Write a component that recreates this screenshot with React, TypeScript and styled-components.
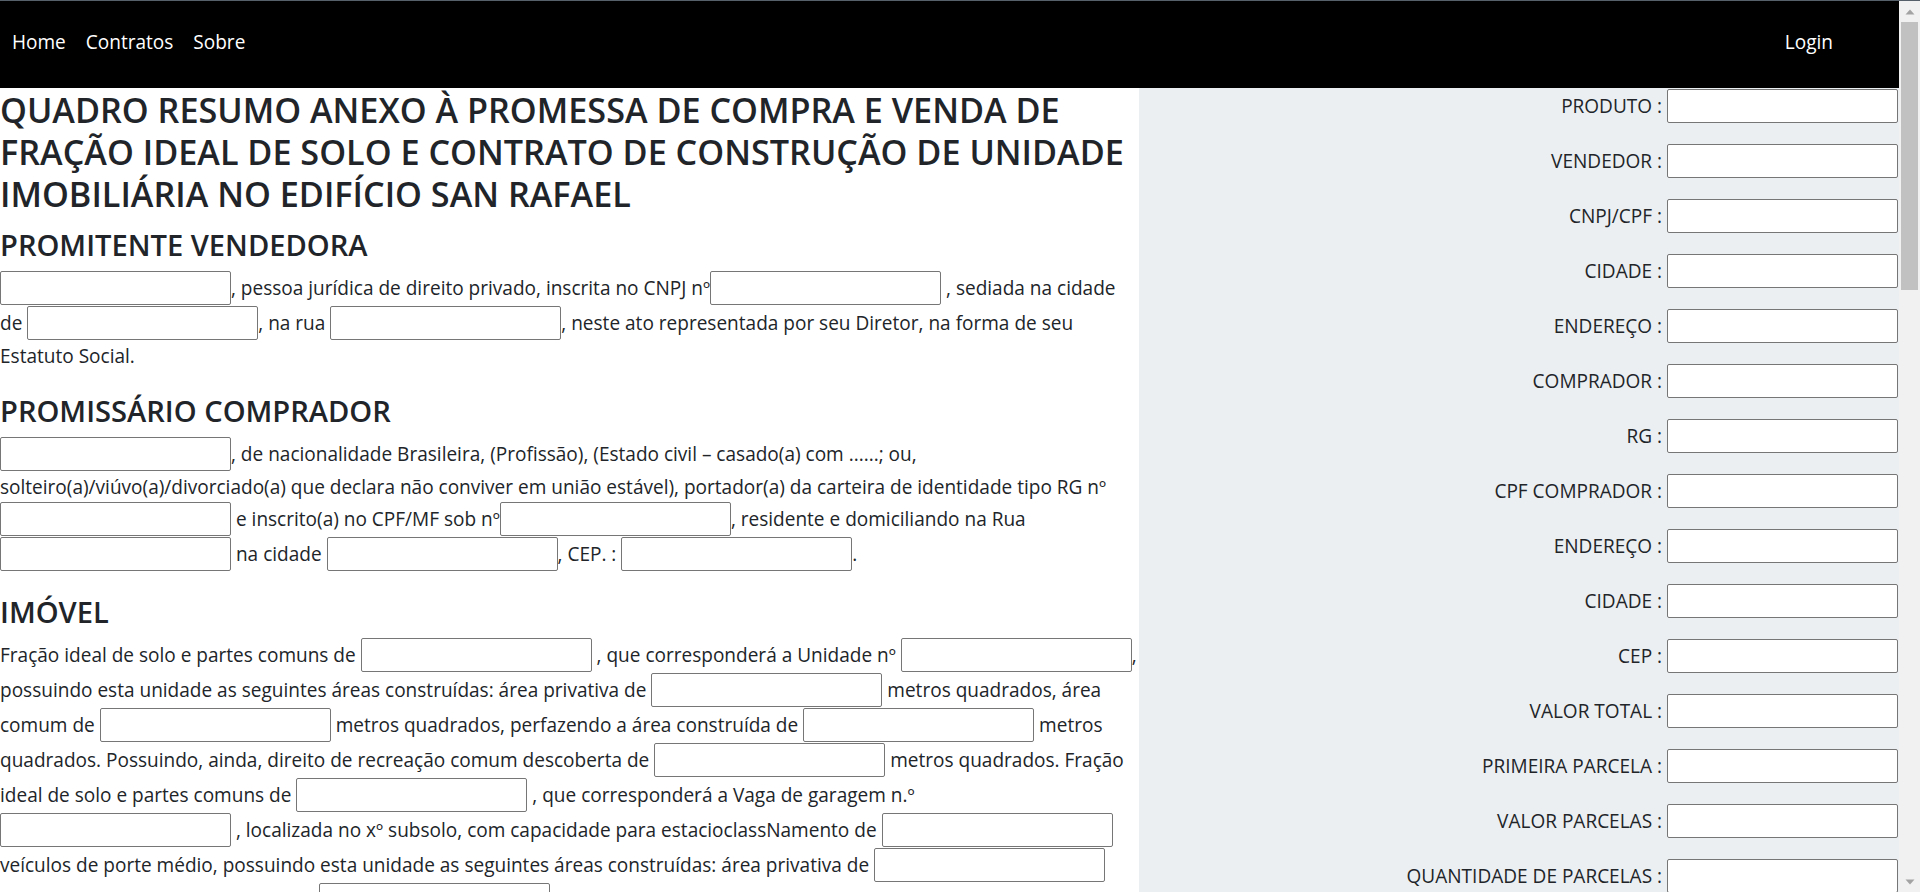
import React from "react";
import styled, { createGlobalStyle } from "styled-components";

const GlobalStyle = createGlobalStyle`
  *, *::before, *::after { box-sizing: border-box; }
  html, body { margin: 0; padding: 0; height: 100%; }
  body {
    font-family: "Open Sans", "Noto Sans", sans-serif;
    font-size: 19.05px;
    line-height: 30px;
    color: #212529;
    background: #ffffff;
    overflow: hidden;
  }
`;

const Window = styled.div`
  display: flex;
  height: 100vh;
  border-top: 1px solid #56606b;
  overflow: hidden;
`;

const Viewport = styled.div`
  flex: 1;
  min-width: 0;
  overflow-y: auto;
  scrollbar-width: none;
  &::-webkit-scrollbar { display: none; }
`;

const ScrollRail = styled.div`
  flex: 0 0 21px;
  display: flex;
  flex-direction: column;
  background: #f1f1f1;
`;

const ScrollButton = styled.div`
  flex: 0 0 21px;
  display: flex;
  align-items: center;
  justify-content: center;
  color: #a3a3a3;
`;

const ScrollTrack = styled.div`
  flex: 1;
  padding: 0 2px;
`;

const ScrollThumb = styled.div`
  height: 268px;
  background: #c1c1c1;
`;

const Navbar = styled.nav`
  display: flex;
  align-items: center;
  height: 87px;
  padding: 0 66px 6px 12px;
  background: #000000;
`;

const NavLink = styled.a<{ $push?: boolean }>`
  color: #ffffff;
  text-decoration: none;
  line-height: 30px;
  margin-right: 20px;
  margin-left: ${(p) => (p.$push ? "auto" : "0")};
  &:last-child { margin-right: 0; }
`;

const Page = styled.main`
  display: grid;
  grid-template-columns: 60% 40%;
`;

const Contract = styled.section`
  padding: 1px 0 0;
`;

const Title = styled.h3`
  margin: 0 0 10px;
  font-size: 34.2px;
  line-height: 42px;
  font-weight: 600;
`;

const SectionTitle = styled.h4`
  margin: 0 0 8px;
  padding-top: 2px;
  font-size: 29.1px;
  line-height: 36px;
  font-weight: 600;
`;

const Clause = styled.p`
  margin: 0 0 20px;
`;

const Field = styled.input.attrs({ type: "text" })`
  display: inline-block;
  width: 231px;
  height: 34px;
  margin: 0 0 1px;
  padding: 1px 2px;
  border: 1px solid #767676;
  border-radius: 2px;
  background: #ffffff;
  font: inherit;
  vertical-align: baseline;
`;

const Summary = styled.aside`
  background: #eceff2;
  padding: 1px 1px 0 0;
`;

const SummaryRow = styled.label`
  display: block;
  margin: 0 0 20px;
  text-align: right;
`;

const Arrow = ({ down }: { down?: boolean }) => (
  <svg width="10" height="6" viewBox="0 0 10 6" aria-hidden="true">
    <polygon points={down ? "0.5,0.5 9.5,0.5 5,5.5" : "0.5,5.5 9.5,5.5 5,0.5"} fill="currentColor" />
  </svg>
);

const summaryLabels = [
  "PRODUTO",
  "VENDEDOR",
  "CNPJ/CPF",
  "CIDADE",
  "ENDEREÇO",
  "COMPRADOR",
  "RG",
  "CPF COMPRADOR",
  "ENDEREÇO",
  "CIDADE",
  "CEP",
  "VALOR TOTAL",
  "PRIMEIRA PARCELA",
  "VALOR PARCELAS",
  "QUANTIDADE DE PARCELAS",
];

export default function App() {
  return (
    <>
      <GlobalStyle />
      <Window>
        <Viewport>
          <Navbar>
            <NavLink href="#">Home</NavLink>
            <NavLink href="#">Contratos</NavLink>
            <NavLink href="#">Sobre</NavLink>
            <NavLink href="#" $push>Login</NavLink>
          </Navbar>
          <Page>
            <Contract>
              <Title>
                QUADRO RESUMO ANEXO À PROMESSA DE COMPRA E VENDA DE FRAÇÃO IDEAL DE SOLO E CONTRATO DE CONSTRUÇÃO DE UNIDADE IMOBILIÁRIA NO EDIFÍCIO SAN RAFAEL
              </Title>

              <SectionTitle>PROMITENTE VENDEDORA</SectionTitle>
              <Clause>
                <Field />
                {", pessoa jurídica de direito privado, inscrita no CNPJ nº"}
                <Field />
                {" , sediada na cidade de "}
                <Field />
                {", na rua "}
                <Field />
                {", neste ato representada por seu Diretor, na forma de seu Estatuto Social."}
              </Clause>

              <SectionTitle>PROMISSÁRIO COMPRADOR</SectionTitle>
              <Clause>
                <Field />
                {", de nacionalidade Brasileira, (Profissão), (Estado civil – casado(a) com ......; ou, solteiro(a)/viúvo(a)/divorciado(a) que declara não conviver em união estável), portador(a) da carteira de identidade tipo RG nº "}
                <Field />
                {" e inscrito(a) no CPF/MF sob nº"}
                <Field />
                {", residente e domiciliando na Rua "}
                <Field />
                {" na cidade "}
                <Field />
                {", CEP. : "}
                <Field />
                {"."}
              </Clause>

              <SectionTitle>IMÓVEL</SectionTitle>
              <Clause>
                {"Fração ideal de solo e partes comuns de "}
                <Field />
                {" , que corresponderá a Unidade nº "}
                <Field />
                {", possuindo esta unidade as seguintes áreas construídas: área privativa de "}
                <Field />
                {" metros quadrados, área comum de "}
                <Field />
                {" metros quadrados, perfazendo a área construída de "}
                <Field />
                {" metros quadrados. Possuindo, ainda, direito de recreação comum descoberta de "}
                <Field />
                {" metros quadrados. Fração ideal de solo e partes comuns de "}
                <Field />
                {" , que corresponderá a Vaga de garagem n.º "}
                <Field />
                {" , localizada no xº subsolo, com capacidade para estacioclassNamento de "}
                <Field />
                {" veículos de porte médio, possuindo esta unidade as seguintes áreas construídas: área privativa de "}
                <Field />
                {" metros quadrados, área comum de "}
                <Field />
                {" metros quadrados, perfazendo a área construída de "}
                <Field />
                {" metros quadrados."}
              </Clause>
            </Contract>

            <Summary>
              {summaryLabels.map((label, i) => (
                <SummaryRow key={i}>
                  {label + " : "}
                  <Field />
                </SummaryRow>
              ))}
            </Summary>
          </Page>
        </Viewport>
        <ScrollRail>
          <ScrollButton>
            <Arrow />
          </ScrollButton>
          <ScrollTrack>
            <ScrollThumb />
          </ScrollTrack>
          <ScrollButton>
            <Arrow down />
          </ScrollButton>
        </ScrollRail>
      </Window>
    </>
  );
}
